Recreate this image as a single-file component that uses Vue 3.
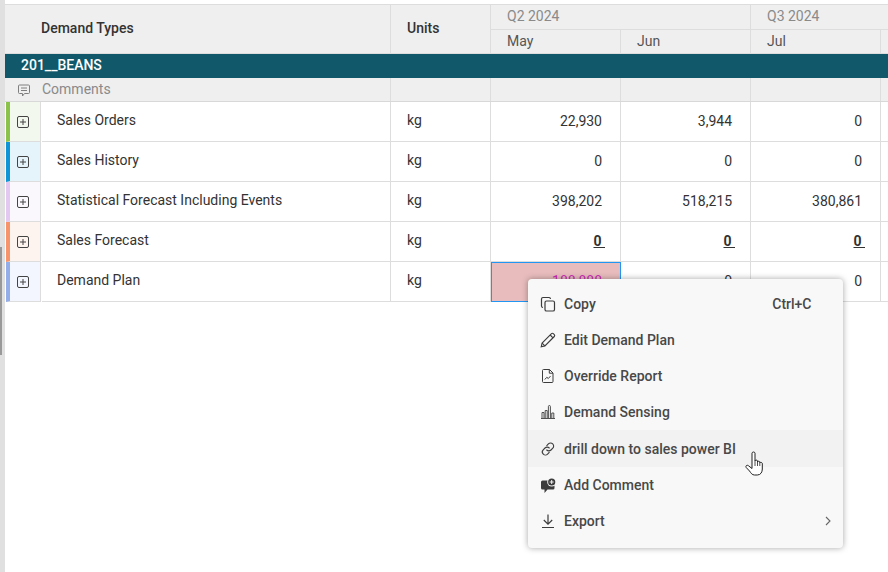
<script setup>
const rows = [
  { name: 'Sales Orders', bar: '#8bc34a', bg: '#f3f8ee', vals: ['22,930', '3,944', '0'] },
  { name: 'Sales History', bar: '#0f94d8', bg: '#e5f3fb', vals: ['0', '0', '0'] },
  { name: 'Statistical Forecast Including Events', bar: '#e3c8f2', bg: '#fbf8fd', vals: ['398,202', '518,215', '380,861'] },
  { name: 'Sales Forecast', bar: '#f7946b', bg: '#fef4ef', vals: ['0\u00a0', '0\u00a0', '0\u00a0'], strong: true },
  { name: 'Demand Plan', bar: '#94aeea', bg: '#f3f6fe', vals: ['188,888', '0', '0'], active: true },
]
const commentCols = [0, 1, 2, 3, 4]
</script>

<template>
  <div class="page">
    <div class="rail"><div class="thumb"></div></div>
    <div class="table">
      <div class="head">
        <div class="h-cell h-types">Demand Types</div>
        <div class="h-cell h-units">Units</div>
        <div class="quarter q2">Q2 2024</div>
        <div class="quarter q3">Q3 2024</div>
        <div class="month m1">May</div>
        <div class="month m2">Jun</div>
        <div class="month m3">Jul</div>
        <div class="month m4"></div>
      </div>
      <div class="group">201__BEANS</div>
      <div class="row comments">
        <div class="c-name">
          <svg class="c-icon" width="14" height="14" viewBox="0 0 14 14" fill="none" stroke="#7f7f7f" stroke-width="1">
            <path d="M2.5 2h9a1 1 0 0 1 1 1v6.5a1 1 0 0 1-1 1H7.5L5.5 13v-2.5h-3a1 1 0 0 1-1-1V3a1 1 0 0 1 1-1z" />
            <path d="M4 5h6M4 7.500h6" />
          </svg>
          <span>Comments</span>
        </div>
        <div v-for="c in commentCols" :key="c" class="c-cell"></div>
      </div>
      <div v-for="r in rows" :key="r.name" class="row data">
        <div class="name-cell">
          <div class="tag" :style="{ background: r.bg, borderLeftColor: r.bar }">
            <svg width="12" height="12" viewBox="0 0 12 12" fill="none" stroke="#444" stroke-width="1">
              <rect x="0.500" y="0.500" width="11" height="11" rx="1.500" />
              <path d="M3 6h6M6 3v6" />
            </svg>
          </div>
          <div class="name">{{ r.name }}</div>
        </div>
        <div class="unit">kg</div>
        <div
          v-for="(v, i) in r.vals"
          :key="i"
          class="num"
          :class="{ strong: r.strong, active: r.active && i === 0 }"
        ><span>{{ v }}</span></div>
        <div class="num"></div>
      </div>
    </div>

    <div class="menu">
      <div class="item">
        <svg width="16" height="16" viewBox="0 0 16 16" fill="none" stroke="#3c3c3c" stroke-width="1.200">
          <rect x="5" y="5" width="9.500" height="10" rx="1.600" />
          <path d="M3 11.500A1.600 1.600 0 0 1 1.500 10V3A1.600 1.600 0 0 1 3 1.500h6A1.600 1.600 0 0 1 10.500 3" />
        </svg>
        <span class="label">Copy</span><span class="kbd">Ctrl+C</span>
      </div>
      <div class="item">
        <svg width="16" height="16" viewBox="0 0 16 16" fill="none" stroke="#3c3c3c" stroke-width="1.100">
          <path d="M1.200 14.800l.9-3.700L11.500 1.700a1.300 1.300 0 0 1 1.800 0l1 1a1.300 1.300 0 0 1 0 1.800L4.900 13.900z" />
          <path d="M10.200 3l2.800 2.800M2.100 11.100l2.800 2.800" />
        </svg>
        <span class="label">Edit Demand Plan</span>
      </div>
      <div class="item">
        <svg width="16" height="16" viewBox="0 0 16 16" fill="none" stroke="#3c3c3c" stroke-width="1">
          <path d="M3.500 1.500h6l3.500 3.500v8.500a1 1 0 0 1-1 1H3.500a1 1 0 0 1-1-1v-11a1 1 0 0 1 1-1z" />
          <path d="M9.300 1.500v3.700H13M4.800 11.500l2-2.200 1.500 1.200 2.200-2.400" />
        </svg>
        <span class="label">Override Report</span>
      </div>
      <div class="item">
        <svg width="16" height="16" viewBox="0 0 16 16" fill="none" stroke="#3c3c3c" stroke-width=".9">
          <path d="M1 14.500h14M2 14V8.500h2V14M5.200 14V6.500h2V14M8.400 14V2.500a1 1 0 0 1 2 0V14M11.800 14V9h2v5" />
        </svg>
        <span class="label">Demand Sensing</span>
      </div>
      <div class="item hover">
        <svg width="16" height="16" viewBox="0 0 16 16" fill="none" stroke="#3c3c3c" stroke-width="1.100" stroke-linecap="round">
          <path d="M6.800 4.600l1.600-1.700a3 3 0 0 1 4.400 4.200l-1.800 1.900a3 3 0 0 1-4.300 0" />
          <path d="M9.200 11.400l-1.600 1.700a3 3 0 0 1-4.400-4.200L5 7a3 3 0 0 1 4.300 0" />
        </svg>
        <span class="label">drill down to sales power BI</span>
      </div>
      <div class="item">
        <svg width="16" height="16" viewBox="0 0 16 16">
          <path fill="#3c3c3c" d="M2.500 3.500h10.500a1.500 1.500 0 0 1 1.500 1.500v6a1.500 1.500 0 0 1-1.500 1.500H7.500L4.500 16v-3.500h-2A1.500 1.500 0 0 1 1 11V5a1.500 1.500 0 0 1 1.500-1.500z" />
          <circle cx="11.700" cy="5" r="4.500" fill="#f8f8f8" />
          <circle cx="11.700" cy="5" r="3.600" fill="#3c3c3c" />
          <path d="M11.700 3v4M9.700 5h4" stroke="#f8f8f8" stroke-width="1" />
        </svg>
        <span class="label">Add Comment</span>
      </div>
      <div class="item">
        <svg width="16" height="16" viewBox="0 0 16 16" fill="none" stroke="#3c3c3c" stroke-width="1.200">
          <path d="M8 1.500v9.500M3.800 7l4.200 4.200L12.200 7M2 14.500h12" />
        </svg>
        <span class="label">Export</span>
        <svg class="chev" width="8" height="10" viewBox="0 0 8 10" fill="none" stroke="#666" stroke-width="1.100">
          <path d="M2 1l4 4-4 4" />
        </svg>
      </div>
    </div>

    <svg class="cursor" width="20" height="26" viewBox="0 0 20 26">
      <path
        fill="#fff"
        stroke="#222"
        stroke-width="1"
        stroke-linejoin="round"
        d="M7 2.200c0-1.600 3-1.600 3 0V10c0-1.200 2.500-1.200 2.500 0v1c0-1 2.300-1 2.300.2v.8c0-1 2.500-.8 2.500.5V18c0 3-1.500 6-5 6H9.500c-2.500 0-3.500-2-5-4L1.200 16.500c-1-1.500.8-3 2.200-1.800L7 17.500z"
      />
      <path d="M10 10v5M12.500 11v4M14.800 12v3" stroke="#222" stroke-width=".8" fill="none" />
    </svg>
  </div>
</template>

<style scoped>
.page {
  position: relative;
  width: 888px;
  height: 572px;
  overflow: hidden;
  background: #fff;
  display: flex;
  font-family: Roboto, "Liberation Sans", sans-serif;
  font-size: 14px;
  color: #333;
}
.rail {
  flex: 0 0 5px;
  background: #e0e0e0;
  position: relative;
}
.thumb {
  position: absolute;
  left: 0;
  top: 247px;
  width: 2px;
  height: 108px;
  background: #999;
}
.table {
  flex: 0 0 883px;
  padding-top: 4px;
}
.head {
  display: grid;
  grid-template-columns: 386px 100px 130px 130px 130px 130px;
  grid-template-rows: 25px 24px;
  background: #efefef;
  border-top: 1px solid #ddd;
  box-sizing: border-box;
  height: 50px;
}
.h-cell {
  grid-row: 1 / 3;
  display: flex;
  align-items: center;
  font-weight: 500;
  color: #333;
  border-right: 1px solid #ddd;
  border-bottom: 1px solid #ddd;
  padding-bottom: 2px;
  box-sizing: border-box;
}
.h-types { padding-left: 36px; }
.h-units { padding-left: 16px; }
.quarter {
  grid-column: span 2;
  padding: 3px 0 0 16px;
  color: #8a8a8a;
  line-height: 17px;
  border-right: 1px solid #ddd;
  border-bottom: 1px solid #ddd;
  box-sizing: border-box;
}
.q3 { border-right: none; }
.month {
  padding: 3px 0 0 16px;
  line-height: 17px;
  color: #555;
  border-right: 1px solid #ddd;
  border-bottom: 1px solid #ddd;
  box-sizing: border-box;
}
.group {
  height: 24px;
  background: #11596a;
  color: #fff;
  font-weight: 500;
  line-height: 23px;
  padding-left: 16px;
}
.row {
  display: grid;
  grid-template-columns: 386px 100px 130px 130px 130px 130px;
}
.comments {
  height: 24px;
  background: #efefef;
  border-bottom: 1px solid #d8d8d8;
  box-sizing: border-box;
}
.c-name {
  display: flex;
  align-items: center;
  color: #8a8a8a;
  border-right: 1px solid #ddd;
  padding: 0 0 2px 12px;
}
.c-icon { margin-right: 11px; margin-top: 3px; }
.c-cell { border-right: 1px solid #ddd; }
.c-cell:last-child { border-right: none; }
.data { height: 40px; }
.name-cell {
  display: flex;
  border-right: 1px solid #ddd;
}
.tag {
  flex: 0 0 35px;
  box-sizing: border-box;
  border-left: 4px solid;
  border-right: 1px solid #ddd;
  border-bottom: 1px solid #ddd;
  margin-left: 1px;
  display: flex;
  align-items: center;
  padding: 1px 0 0 7px;
}
.name {
  flex: 1;
  border-bottom: 1px solid #ddd;
  padding: 8px 0 0 15px;
  line-height: 20px;
  color: #333;
  margin-left: 1px;
}
.unit {
  border-right: 1px solid #ddd;
  border-bottom: 1px solid #ddd;
  padding: 8px 0 0 16px;
  line-height: 20px;
}
.num {
  border-right: 1px solid #ddd;
  border-bottom: 1px solid #ddd;
  padding: 0 18px 0 0;
  text-align: right;
  line-height: 39px;
}
.num:last-child { border-right: none; }
.strong {
  font-weight: 700;
  padding-right: 15px;
}
.strong span { text-decoration: underline; }
.active {
  background: #e8bcbc;
  color: #cc28b8;
  outline: 1px solid #2196f3;
  outline-offset: -1px;
  border-color: transparent;
}
.menu {
  position: absolute;
  left: 528px;
  top: 279px;
  width: 315px;
  height: 269px;
  box-sizing: border-box;
  padding-top: 6.700px;
  background: #f8f8f8;
  border-radius: 4px;
  box-shadow: 0 0 6px rgba(0, 0, 0, .35);
}
.item {
  height: 36.200px;
  display: flex;
  align-items: center;
  padding: 0 12px;
  color: #484848;
  font-weight: 500;
}
.item svg { flex: 0 0 16px; }
.hover { background: #f2f2f2; }
.label { margin-left: 8px; flex: 1; }
.kbd { margin-right: 19.500px; }
.item .chev { flex: 0 0 8px; margin-right: -1px; }
.cursor {
  position: absolute;
  left: 745px;
  top: 451px;
}
</style>
